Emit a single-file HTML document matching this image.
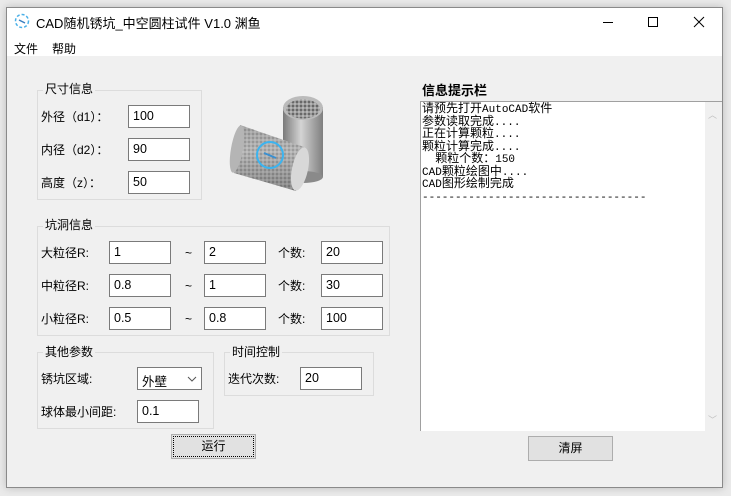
<!DOCTYPE html>
<html><head><meta charset="utf-8"><style>
*{box-sizing:border-box;margin:0;padding:0}
body{width:731px;height:496px;background:#eaeaea;position:relative;overflow:hidden;font-family:"Liberation Sans","Noto Sans CJK SC",sans-serif;font-size:12px;color:#000}
.a{position:absolute}
.win{left:6px;top:7px;width:717px;height:481px;border:1px solid #8a8a8a;background:#f0f0f0;box-shadow:0 0 8px rgba(0,0,0,.2)}
.tb{left:7px;top:8px;width:715px;height:48px;background:#fff}
.grp{border:1px solid #dcdcdc}
.gt{background:#f0f0f0;padding:0 2px;font-size:12px;line-height:14px}
.in{background:#fff;border:1px solid #7a7a7a;height:23px;padding:3px 0 0 4px;font-size:12.5px}
.lb{font-size:12px;line-height:14px}
.btn{border:1px solid #adadad;background:#e1e1e1;text-align:center;font-size:12px;line-height:22px}
.mono{font-family:"Noto Sans CJK SC","WenQuanYi Zen Hei",monospace;font-size:12px}
.mono div{height:12.5px;line-height:12.5px;overflow:visible;white-space:pre}
.mono b{font-family:"Liberation Mono",monospace;font-weight:normal;font-size:11px;line-height:12px}
</style></head><body>
<div class="a win"></div>
<div class="a tb"></div>
<svg class="a" style="left:14px;top:13px" width="16" height="16"><circle cx="8" cy="8" r="6.5" fill="none" stroke="#4ab0e8" stroke-width="1.5" stroke-dasharray="3 2"/><path d="M5 7l6 3" stroke="#3a7fc0" stroke-width="1.5"/></svg>
<div class="a" style="left:36px;top:13px;font-size:13px">CAD随机锈坑_中空圆柱试件 V1.0 渊鱼</div>
<svg class="a" style="left:600px;top:15px" width="115" height="14" stroke="#000" fill="none" stroke-width="1"><path d="M3 7.5h10"/><rect x="48.5" y="2.5" width="9" height="9"/><path d="M94 2l10 10M104 2l-10 10"/></svg>
<div class="a" style="left:14px;top:40px;font-size:12px">文件</div>
<div class="a" style="left:52px;top:40px;font-size:12px">帮助</div>

<div class="a grp" style="left:37px;top:90px;width:165px;height:110px"></div>
<div class="a gt" style="left:43px;top:82px">尺寸信息</div>
<div class="a lb" style="left:41px;top:110px">外径（d1）：</div>
<div class="a lb" style="left:41px;top:143px">内径（d2）：</div>
<div class="a lb" style="left:41px;top:176px">高度（z）：</div>
<div class="a in" style="left:128px;top:105px;width:62px">100</div>
<div class="a in" style="left:128px;top:138px;width:62px">90</div>
<div class="a in" style="left:128px;top:171px;width:62px">50</div>

<svg class="a" style="left:228px;top:93px" width="100" height="102">
<defs><linearGradient id="g" x1="0" x2="1"><stop offset="0" stop-color="#7a7a7a"/><stop offset=".45" stop-color="#d4d4d4"/><stop offset="1" stop-color="#7e7e7e"/></linearGradient>
<linearGradient id="h" x1="0" y1="0" x2="0" y2="1"><stop offset="0" stop-color="#aaa"/><stop offset=".4" stop-color="#c8c8c8"/><stop offset="1" stop-color="#777"/></linearGradient>
<pattern id="p" width="4" height="4" patternUnits="userSpaceOnUse"><rect width="4" height="4" fill="#9a9a9a"/><circle cx="1" cy="1" r=".9" fill="#444"/><circle cx="3" cy="3" r=".7" fill="#ddd"/></pattern></defs>
<rect x="55" y="14" width="40" height="70" fill="url(#g)"/><ellipse cx="75" cy="84" rx="20" ry="6" fill="#8a8a8a"/>
<ellipse cx="75" cy="15" rx="20" ry="12" fill="#bbb"/><ellipse cx="75" cy="16" rx="17" ry="9.5" fill="url(#p)"/>
<path d="M12 32 L76 54 L68 98 L6 80 Z" fill="url(#h)"/>
<path d="M12 32 L76 54 L68 98 L6 80 Z" fill="url(#p)" opacity=".45"/>
<ellipse cx="9" cy="56" rx="6" ry="24" fill="#b5b5b5" transform="rotate(10 9 56)"/>
<ellipse cx="72" cy="76" rx="8" ry="22" fill="#d8d8d8" transform="rotate(12 72 76)"/>
<circle cx="42" cy="62" r="13" fill="none" stroke="#3bb4f0" stroke-width="2"/>
<path d="M36 60l12 5" stroke="#3a8fd0" stroke-width="2"/>
</svg>

<div class="a grp" style="left:37px;top:226px;width:353px;height:110px"></div>
<div class="a gt" style="left:43px;top:218px">坑洞信息</div>
<div class="a lb" style="left:41px;top:246px">大粒径R:</div>
<div class="a lb" style="left:41px;top:279px">中粒径R:</div>
<div class="a lb" style="left:41px;top:312px">小粒径R:</div>
<div class="a in" style="left:109px;top:241px;width:62px">1</div>
<div class="a in" style="left:109px;top:274px;width:62px">0.8</div>
<div class="a in" style="left:109px;top:307px;width:62px">0.5</div>
<div class="a lb" style="left:185px;top:246px">~</div>
<div class="a lb" style="left:185px;top:279px">~</div>
<div class="a lb" style="left:185px;top:312px">~</div>
<div class="a in" style="left:204px;top:241px;width:62px">2</div>
<div class="a in" style="left:204px;top:274px;width:62px">1</div>
<div class="a in" style="left:204px;top:307px;width:62px">0.8</div>
<div class="a lb" style="left:278px;top:246px">个数:</div>
<div class="a lb" style="left:278px;top:279px">个数:</div>
<div class="a lb" style="left:278px;top:312px">个数:</div>
<div class="a in" style="left:321px;top:241px;width:62px">20</div>
<div class="a in" style="left:321px;top:274px;width:62px">30</div>
<div class="a in" style="left:321px;top:307px;width:62px">100</div>

<div class="a grp" style="left:37px;top:352px;width:177px;height:77px"></div>
<div class="a gt" style="left:43px;top:345px">其他参数</div>
<div class="a lb" style="left:41px;top:372px">锈坑区域:</div>
<div class="a in" style="left:137px;top:367px;width:65px;border-color:#7a7a7a">外壁</div>
<svg class="a" style="left:187px;top:376px" width="10" height="6"><path d="M1 1l4 4 4-4" stroke="#555" fill="none"/></svg>
<div class="a lb" style="left:41px;top:405px">球体最小间距:</div>
<div class="a in" style="left:137px;top:400px;width:62px">0.1</div>

<div class="a grp" style="left:224px;top:352px;width:150px;height:44px"></div>
<div class="a gt" style="left:230px;top:345px">时间控制</div>
<div class="a lb" style="left:228px;top:372px">迭代次数:</div>
<div class="a in" style="left:300px;top:367px;width:62px">20</div>

<div class="a btn" style="left:171px;top:434px;width:85px;height:25px;outline:1px dotted #000;outline-offset:-3px">运行</div>

<div class="a" style="left:422px;top:80px;font-size:13px;font-weight:bold">信息提示栏</div>
<div class="a" style="left:420px;top:101px;width:302px;height:330px;background:#fff;border-left:1px solid #a0a0a0;border-top:1px solid #a0a0a0"></div>
<div class="a" style="left:705px;top:102px;width:17px;height:329px;background:#f0f0f0"></div>
<div class="a" style="left:708px;top:108px;color:#c0c0c0;font-size:9px">︿</div>
<div class="a" style="left:708px;top:413px;color:#c0c0c0;font-size:9px">﹀</div>
<div class="a mono" style="left:422px;top:102px"><div>请预先打开<b>AutoCAD</b>软件</div><div>参数读取完成<b>....</b></div><div>正在计算颗粒<b>....</b></div><div>颗粒计算完成<b>....</b></div><div><b>  </b>颗粒个数：<b>150</b></div><div><b>CAD</b>颗粒绘图中<b>....</b></div><div><b>CAD</b>图形绘制完成</div><div><b>----------------------------------</b></div></div>
<div class="a btn" style="left:528px;top:436px;width:85px;height:25px">清屏</div>
</body></html>
